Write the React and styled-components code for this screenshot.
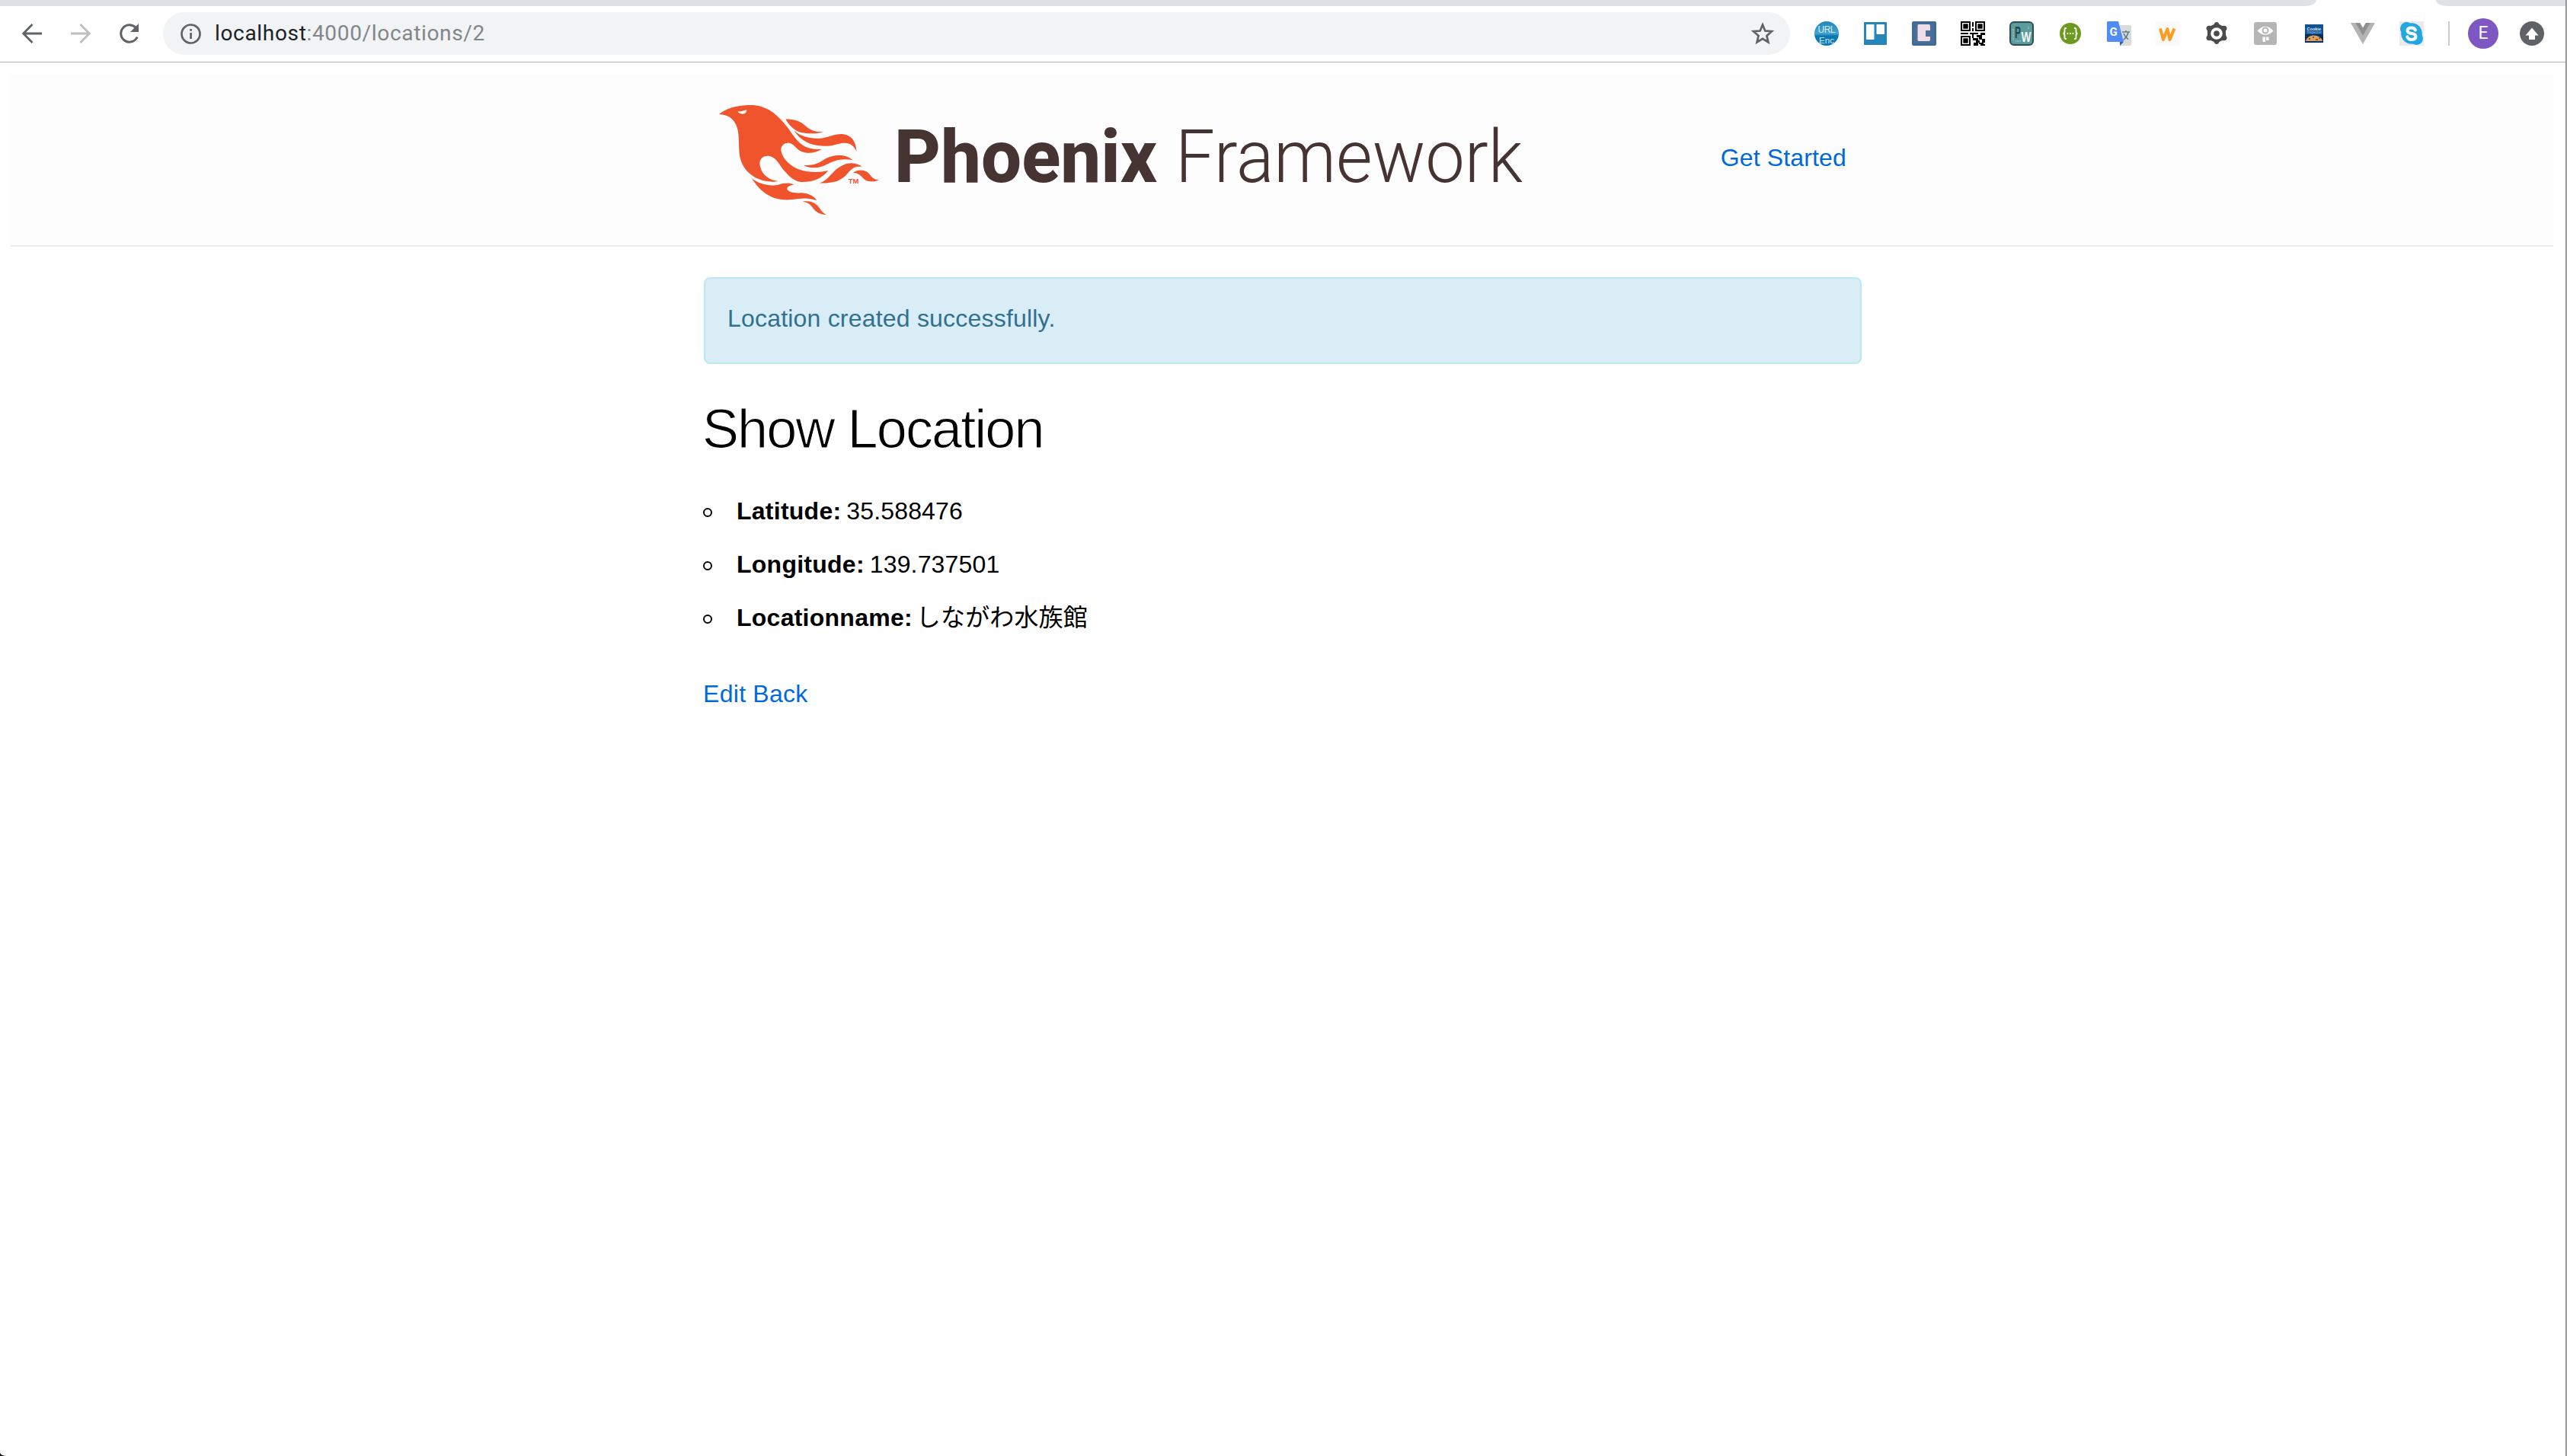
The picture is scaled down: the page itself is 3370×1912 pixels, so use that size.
import React from 'react';
import styled, { createGlobalStyle } from 'styled-components';

const GlobalStyle = createGlobalStyle`
  * { box-sizing: border-box; }
  body { margin: 0; background: #151a18; overflow: hidden; }
  ul, h1, p { margin: 0; padding: 0; }
`;

const Desktop = styled.div`
  display: flex;
  width: 3370px;
  height: 1912px;
  font-family: "Liberation Sans", "Noto Sans CJK JP", sans-serif;
`;

const Window = styled.div`
  display: flex;
  flex-direction: column;
  width: 3368px;
  background: #fff;
  border-bottom-left-radius: 8px 5px;
`;

const DesktopEdge = styled.div`
  width: 2px;
  background: linear-gradient(90deg, #84888a 50%, #a9aca9 50%);
`;

const TabStrip = styled.div`
  display: flex;
  justify-content: space-between;
  height: 8px;
`;

const TabStripPart = styled.div`
  width: ${(p) => p.$width}px;
  background: #dee1e6;
  border-radius: ${(p) => (p.$side === 'left' ? '0 0 16px 0 / 0 0 8px 0' : '0 0 0 16px / 0 0 0 8px')};
`;

const Toolbar = styled.div`
  display: flex;
  align-items: center;
  height: 74px;
  padding: 0 28px 1px 26px;
  border-bottom: 1px solid #b1b3b5;
`;

const NavButtons = styled.div`
  display: flex;
  gap: 32px;
  margin-right: 28px;
`;

const Icon = styled.svg`
  display: block;
  flex: none;
  width: 32px;
  height: 32px;
`;

const Omnibox = styled.div`
  display: flex;
  align-items: center;
  width: 2136px;
  height: 56px;
  padding: 0 20px;
  border-radius: 28px;
  background: #f1f3f4;
`;

const Url = styled.div`
  flex: 1;
  margin-left: 16px;
  color: #80868b;
  font: 400 28px/56px Roboto, sans-serif;
  letter-spacing: 0.67px;
`;

const Host = styled.span`
  color: #202124;
`;

const Extensions = styled.div`
  display: flex;
  gap: 32px;
  margin-left: 32px;
`;

const Divider = styled.div`
  width: 2px;
  height: 32px;
  margin: 0 24px 0 32px;
  background: #cbccce;
`;

const Avatar = styled.div`
  width: 40px;
  height: 40px;
  margin-right: 28px;
  border-radius: 50%;
  background: #7e57c2;
  color: #fff;
  font: 400 23px/40px Roboto, sans-serif;
  text-align: center;
`;

const Page = styled.div`
  padding: 16px 16px 0 14px;
`;

const Header = styled.header`
  height: 226px;
  background: #fdfdfd;
  border-bottom: 2px solid #eaeaea;
`;

const Container = styled.div`
  width: 1520px;
  margin: 0 auto 0 910px;
`;

const HeaderRow = styled(Container)`
  display: flex;
  align-items: center;
  justify-content: space-between;
  height: 224px;
  padding: 0 20px;
`;

const Logo = styled.svg`
  display: block;
  width: 1080px;
  height: 144px;
`;

const Link = styled.a`
  color: #0069d9;
  font-size: 32px;
  line-height: 50px;
  letter-spacing: ${(p) => p.$spacing || 0.15}px;
  text-decoration: none;
`;

const NavLink = styled(Link)`
  margin-bottom: 6px;
`;

const Alert = styled.p`
  && {
    margin-top: 40px;
    padding: 27px 29px 33px;
  }
  height: 114px;
  border: 2px solid #bce8f1;
  border-radius: 8px;
  background: #d9edf7;
  color: #31708f;
  font-size: 32px;
  line-height: 51px;
  letter-spacing: 0.2px;
`;

const Title = styled.h1`
  && { margin: 42px 0 40px -2px; }
  color: #000;
  font-size: 72px;
  font-weight: 400;
  line-height: 86px;
  letter-spacing: -1.9px;
  -webkit-text-stroke: 1.1px #fff;
`;

const Fields = styled.ul`
  display: flex;
  flex-direction: column;
  gap: 20px;
  list-style: none;
`;

const Field = styled.li`
  display: flex;
  align-items: center;
  height: 50px;
  color: #000;
  font-size: 32px;
  line-height: 50px;
`;

const Bullet = styled.span`
  width: 12px;
  height: 12px;
  margin: 4px 32px 0 -1px;
  border: 2px solid #000;
  border-radius: 50%;
`;

const Label = styled.strong`
  font-weight: 700;
  letter-spacing: 0.25px;
`;

const Value = styled.span`
  margin-left: ${(p) => (p.$wide ? 5 : 7)}px;
  letter-spacing: 0.15px;
`;

const Actions = styled.div`
  margin: 50px 0 0 -1px;
  font-size: 32px;
  line-height: 50px;
`;

const Back = () => (
  <Icon viewBox="0 0 32 32" fill="none" stroke="#5f6368" strokeWidth="2.8">
    <path d="M29 16H5M16.5 4 4.7 16l11.8 12" />
  </Icon>
);
const Forward = () => (
  <Icon viewBox="0 0 32 32" fill="none" stroke="#bdbebf" strokeWidth="2.8">
    <path d="M3 16h24M15.500 4 27.300 16l-11.800 12" />
  </Icon>
);
const Reload = () => (
  <Icon viewBox="0 0 32 32">
    <path d="M26.200 20.500a11.200 11.200 0 1 1-2.300-12.400" fill="none" stroke="#5f6368" strokeWidth="3" />
    <path d="M28 3v11H17z" fill="#5f6368" />
  </Icon>
);
const Info = () => (
  <Icon viewBox="0 0 32 32">
    <circle cx="16.500" cy="16.500" r="12" fill="none" stroke="#5f6368" strokeWidth="2.700" />
    <path d="M15.200 15h2.700v8h-2.700zM15.200 10h2.700v2.800h-2.700z" fill="#5f6368" />
  </Icon>
);
const Star = () => (
  <Icon viewBox="0 0 32 32">
    <path
      d="M16 4.500l3.300 8 8.700.7-6.600 5.700 2 8.500-7.400-4.500-7.400 4.500 2-8.500L4 13.200l8.700-.7z"
      fill="none" stroke="#5f6368" strokeWidth="2.700"
    />
  </Icon>
);

const UrlEncoder = () => (
  <Icon viewBox="0 0 32 32">
    <defs>
      <linearGradient id="enc" x2="0" y2="1">
        <stop stopColor="#1d87ba" /><stop offset=".5" stopColor="#45a4d0" /><stop offset=".6" stopColor="#0c78b2" /><stop offset="1" stopColor="#0a7ab5" />
      </linearGradient>
    </defs>
    <circle cx="16" cy="16" r="16" fill="url(#enc)" />
    <text x="16" y="15" fontFamily="Liberation Sans" fontSize="12" textAnchor="middle" textLength="23" fill="#d7eaf3">URL</text>
    <text x="16" y="28.500" fontFamily="Liberation Sans" fontSize="11.500" textAnchor="middle" textLength="20" fill="#d7eaf3">Enc</text>
  </Icon>
);
const Trello = () => (
  <Icon viewBox="0 0 32 32">
    <path fill="#2586b9" d="M1 1h30v30H1z" />
    <rect x="4" y="4" width="10.500" height="20" rx="1" fill="#fff" />
    <rect x="17.500" y="4" width="10.500" height="13" rx="1" fill="#fff" />
  </Icon>
);
const Cblock = () => (
  <Icon viewBox="0 0 32 32">
    <rect width="32" height="32" rx="2" fill="#3e6c99" />
    <rect x="3.500" y="3" width="25" height="26" fill="#4b6e97" />
    <path d="M9 4h13q2 0 2 2v6h-6v8h6v4q0 2-2 2H9q-1.500 0-1.500-2V6q0-2 1.500-2z" fill="#eedde6" />
  </Icon>
);
const QrCode = () => (
  <Icon viewBox="0 0 32 32">
    <g fill="none" stroke="#000" strokeWidth="2">
      <path d="M1 1h11v11H1zM20 1h11v11H20zM1 20h11v11H1z" />
    </g>
    <path d="M3 3h7v7H3zM22 3h7v7h-7zM3 22h7v7H3z" stroke="#fff" strokeWidth=".6" />
    <path d="M15 1h2v6h-2zM15 9h2v4h-2zM0 15h10v2H0zM12 15h11v2H12zM26 15h6v3h-6zM15 17h2v5h-2zM21 18h7v3h-7zM24 20h4v4h-4zM16 22h7v3h-7zM28 23h4v5h-4zM20 25h5v3h-5zM17 28h6v4h-6zM24 28h6v2h-6zM26 30h6v2h-6z" />
  </Icon>
);
const PwBadge = () => (
  <Icon viewBox="0 0 32 32">
    <rect x="1" y="1" width="30" height="30" rx="5" fill="#5d9c9c" stroke="#284f52" strokeWidth="2" />
    <path d="M5 10v16M8 26h7M25 7v4" stroke="#9dc2c2" strokeWidth="2" strokeDasharray="1 1" />
    <text x="7" y="22" fontFamily="Liberation Sans" fontWeight="700" fontSize="22" textLength="8" lengthAdjust="spacingAndGlyphs" fill="#23484b">P</text>
    <text x="15.500" y="27" fontFamily="Liberation Sans" fontWeight="700" fontSize="18" textLength="13" lengthAdjust="spacingAndGlyphs" fill="#f0f7f7">W</text>
  </Icon>
);
const Braces = () => (
  <Icon viewBox="0 0 32 32">
    <circle cx="16" cy="16" r="14" fill="#6c9a1f" />
    <g fill="none" stroke="#fff" strokeWidth="1.800">
      <path d="M11 9H9.800Q8.500 9 8.500 11v2.500q0 2.500-2 2.500 2 0 2 2.500V21q0 2 1.300 2H11M21 9h1.200q1.300 0 1.300 2v2.500q0 2.500 2 2.500-2 0-2 2.500V21q0 2-1.300 2H21" />
    </g>
    <g fill="#fff"><circle cx="12.500" cy="16" r="1.100" /><circle cx="16" cy="16" r="1.100" /><circle cx="19.500" cy="16" r="1.100" /></g>
  </Icon>
);
const Translate = () => (
  <Icon viewBox="0 0 32 32">
    <path d="M14 5h16q2 0 2 2v23q0 2-2 2H17z" fill="#d9dadc" />
    <path d="M20 14h10M25 12v2M28 14q-1 6-6.500 10.500M22 16q2 5 6 7.500" fill="none" stroke="#607d8b" strokeWidth="1.600" />
    <path d="M17 27h5l-5 5z" fill="#3a55c8" />
    <path d="M1.500 0H15l7 27H1.500Q0 27 0 25.500v-24Q0 0 1.500 0z" fill="#4f8df5" />
    <text x="3.500" y="18.500" fontFamily="Roboto" fontWeight="700" fontSize="15" fill="#fff">G</text>
  </Icon>
);
const Wmark = () => (
  <Icon viewBox="0 0 32 32">
    <path fill="#fafafa" d="M0 0h32v32H0z" />
    <path d="M6 9.500l4 14.500 5.500-14 3 14L24.500 9.500" fill="none" stroke="#fb9d25" strokeWidth="4" strokeLinejoin="round" />
  </Icon>
);
const Nut = () => (
  <Icon viewBox="0 0 32 32">
    <path
      d="M16 1q2.500 0 3.500 3l4 2q5-1 5.500 1.500 1.500 2-1 5v6q2.500 3 1 5-.5 2.500-5.500 1.500l-4 2q-1 3-3.500 3t-3.500-3l-4-2q-5 1-5.500-1.500-1.500-2 1-5v-6q-2.500-3-1-5Q3.500 5 8.500 6l4-2Q13.500 1 16 1z"
      fill="#4b4b4b"
    />
    <circle cx="16" cy="16" r="5.800" fill="#4b4b4b" stroke="#fff" strokeWidth="4" />
  </Icon>
);
const EyeP = () => (
  <Icon viewBox="0 0 32 32">
    <rect x="1" y="1" width="30" height="30" rx="3" fill="#b5b5b5" />
    <path d="M5.500 12.500Q16 1 26.500 12.500 16 23 5.500 12.500z" fill="#fff" />
    <circle cx="16" cy="12" r="4.500" fill="#b5b5b5" /><circle cx="16" cy="12" r="2.500" fill="#fff" />
    <path d="M12.500 20.500h3.500V27h-3.500zM17 20.500h3.500V25H17z" fill="#fff" />
  </Icon>
);
const Cookie = () => (
  <Icon viewBox="0 0 32 32">
    <path fill="#115390" d="M4 4h24v24H4z" />
    <path fill="#082f60" d="M4 17h24v11H4z" />
    <path d="M5 26q2-7 9-7.500Q25 18 27 26z" fill="#dda15e" />
    <path d="M9 23h2M14 21h2M18 24h3M22 22h2" stroke="#6d3c18" strokeWidth="1.500" />
    <text x="6.500" y="11.500" fontFamily="Liberation Sans" fontWeight="700" fontSize="6" textLength="18.500" lengthAdjust="spacingAndGlyphs" fill="#d8e8f4">Cookie</text>
    <text x="6.500" y="16" fontFamily="Liberation Sans" fontSize="4.500" textLength="19" lengthAdjust="spacingAndGlyphs" fill="#9fc3e0">Inspector</text>
  </Icon>
);
const Vue = () => (
  <Icon viewBox="0 0 32 32">
    <path d="M0 2h32L16 30z" fill="#b3b3b3" />
    <path d="M6.300 2h6L16 8.500 19.700 2h6L16 18.500z" fill="#8f8f8f" />
    <path d="M12.300 2h7.400L16 8.500z" fill="#fff" />
  </Icon>
);
const Skype = () => (
  <Icon viewBox="0 0 32 32">
    <path fill="#ececee" d="M0 0h32v32H0z" />
    <circle cx="16" cy="16" r="13.800" fill="#22a7e1" /><circle cx="9.500" cy="9.500" r="8.500" fill="#22a7e1" /><circle cx="22.500" cy="22.500" r="8.500" fill="#22a7e1" />
    <path d="M21 11.500Q19.500 8.500 16 8.500q-5.500 0-5.500 3.700 0 3 5.500 3.800 5.500.9 5.500 4.100 0 3.800-5.500 3.800-4.500 0-5.700-3.600" fill="none" stroke="#fff" strokeWidth="4" strokeLinecap="round" />
  </Icon>
);
const Update = () => (
  <Icon viewBox="0 0 32 32">
    <circle cx="16" cy="16" r="16" fill="#5f6368" />
    <path d="M16 8.500l8.500 10H20v5.500h-8v-5.500H7.500z" fill="#fff" />
  </Icon>
);

const extensionIcons = [
  UrlEncoder, Trello, Cblock, QrCode, PwBadge, Braces, Translate,
  Wmark, Nut, EyeP, Cookie, Vue, Skype,
];

const PhoenixLogo = () => (
  <Logo viewBox="944 138 1080 144">
    <g transform="translate(920 120) scale(.333333)" fill="#f0542d">
      <path
        fillRule="evenodd"
        d="M72 90C100 66 150 52 205 54C265 58 305 95 340 140C355 160 372 187 392 205C410 222 440 230 476 228C450 245 415 247 390 234C375 224 365 208 352 204C335 200 316 208 316 232C320 262 345 285 370 300C410 320 460 322 502 312C475 345 440 358 395 357C360 352 340 325 320 302C305 280 295 262 272 255C250 250 232 262 232 285C236 325 265 349 305 354C260 362 215 345 190 322C160 292 152 262 151 230C149 190 152 160 138 130C127 105 105 92 72 90ZM146 79C155 80 168 77 181 73C180 88 168 91 158 88C150 86 147 84 146 79Z"
      />
      <path d="M334 110C370 108 395 120 415 138C435 155 455 162 484 158C460 168 425 168 395 162C365 152 350 135 334 110Z" />
      <path d="M368 155C395 178 430 186 470 185C505 182 520 168 555 168C595 170 612 200 613 236C603 212 585 202 565 203C535 205 525 216 485 215C430 213 395 195 368 155Z" />
      <path d="M404 290C440 293 460 285 480 272C505 255 530 251 550 252C575 254 588 262 600 271C575 266 550 266 525 275C500 283 480 300 450 301C430 301 415 297 404 290Z" />
      <path d="M468 361C495 352 505 335 520 320C545 295 570 282 597 283C615 285 628 290 634 297C610 293 600 300 585 315C565 340 545 356 510 359C495 361 480 363 468 361Z" />
      <path d="M600 320C620 307 645 308 660 322C672 335 680 350 701 348C690 357 665 357 650 350C635 342 630 322 600 320Z" />
      <path d="M200 342C230 365 270 375 305 368C325 362 345 358 367 367C350 370 338 378 340 385C345 398 370 402 400 400C430 404 450 415 456 430C430 420 410 420 385 423C350 428 320 430 290 420C250 405 225 380 200 342Z" />
      <path d="M400 434C425 430 445 434 460 450C470 462 475 475 494 486C475 486 460 480 447 466C435 450 425 436 400 434Z" />
      <text x="581" y="363" fontFamily="Liberation Sans" fontWeight="700" fontSize="27" textLength="41" lengthAdjust="spacingAndGlyphs">TM</text>
    </g>
    <g fill="#463433" fontFamily="Roboto, sans-serif" fontSize="97">
      <text x="1174" y="239" fontWeight="800" textLength="345" lengthAdjust="spacingAndGlyphs">Phoenix</text>
      <text x="1543" y="239" fontWeight="300" textLength="456" lengthAdjust="spacingAndGlyphs">Framework</text>
    </g>
  </Logo>
);

const fields = [
  { label: 'Latitude:', value: '35.588476' },
  { label: 'Longitude:', value: '139.737501' },
  { label: 'Locationname:', value: 'しながわ水族館', wide: true },
];

export default function App() {
  return (
    <Desktop>
      <GlobalStyle />
      <Window>
        <TabStrip>
          <TabStripPart $width={3041} $side="left" />
          <TabStripPart $width={170} $side="right" />
        </TabStrip>
        <Toolbar>
          <NavButtons><Back /><Forward /><Reload /></NavButtons>
          <Omnibox>
            <Info />
            <Url><Host>localhost</Host>:4000/locations/2</Url>
            <Star />
          </Omnibox>
          <Extensions>
            {extensionIcons.map((Ext) => <Ext key={Ext.name} />)}
          </Extensions>
          <Divider />
          <Avatar>E</Avatar>
          <Update />
        </Toolbar>
        <Page>
          <Header>
            <HeaderRow>
              <PhoenixLogo />
              <NavLink>Get Started</NavLink>
            </HeaderRow>
          </Header>
          <Container as="main">
            <Alert>Location created successfully.</Alert>
            <Title>Show Location</Title>
            <Fields>
              {fields.map((f) => (
                <Field key={f.label}>
                  <Bullet />
                  <Label>{f.label}</Label>
                  <Value $wide={f.wide}>{f.value}</Value>
                </Field>
              ))}
            </Fields>
            <Actions>
              <Link $spacing={0.3}>Edit</Link> <Link $spacing={0.3}>Back</Link>
            </Actions>
          </Container>
        </Page>
      </Window>
      <DesktopEdge />
    </Desktop>
  );
}
